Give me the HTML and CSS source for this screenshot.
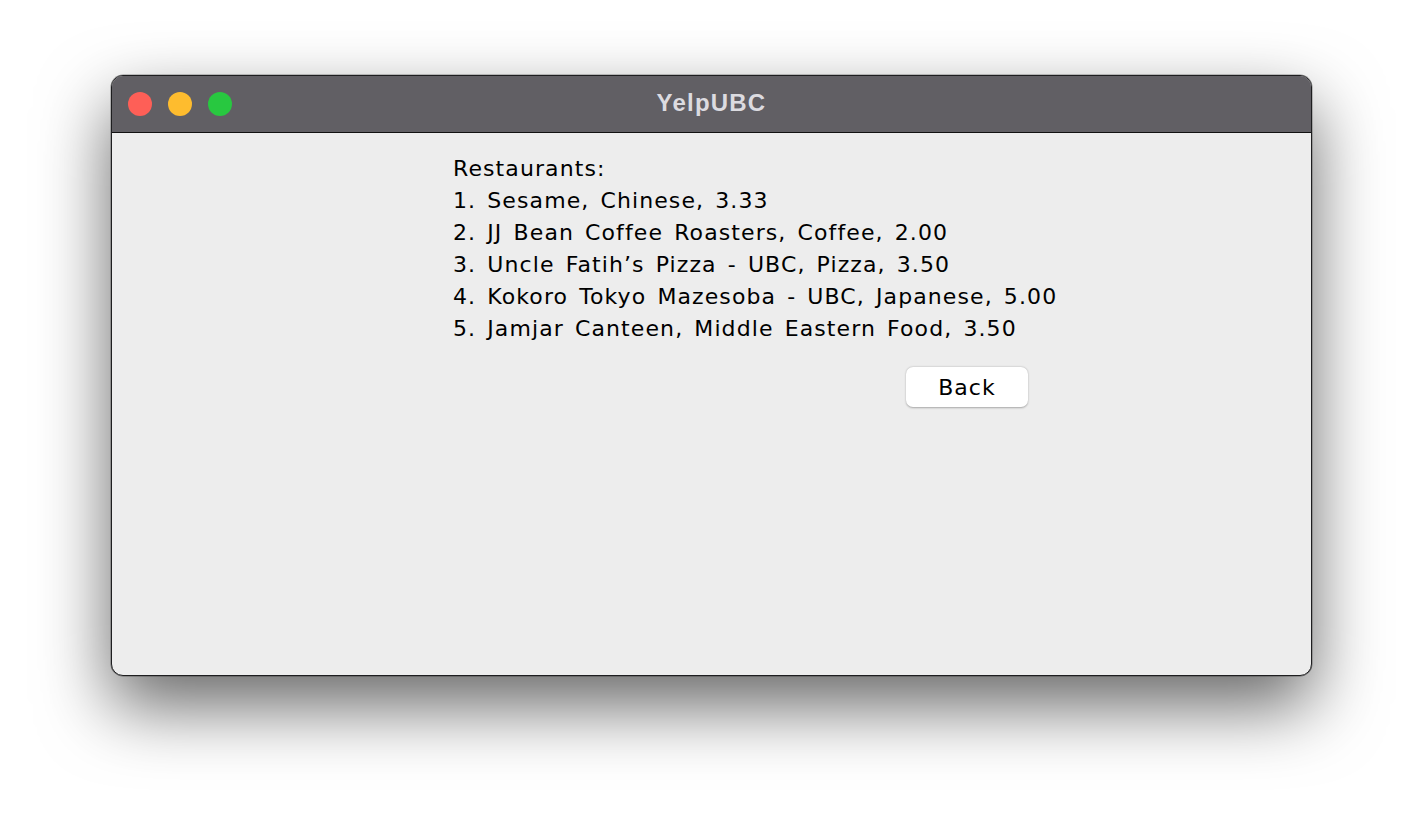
FILE: index.html
```html
<!DOCTYPE html>
<html>
<head>
<meta charset="utf-8">
<link rel="stylesheet" href="styles.css">
</head>
<body>
<div class="window">
  <div class="titlebar">
    <div class="lights">
      <span class="light red"></span>
      <span class="light yellow"></span>
      <span class="light green"></span>
    </div>
    <div class="title">YelpUBC</div>
  </div>
  <div class="content">
    <div class="list">
      <div class="line">Restaurants:</div>
      <div class="line">1. Sesame, Chinese, 3.33</div>
      <div class="line">2. JJ Bean Coffee Roasters, Coffee, 2.00</div>
      <div class="line">3. Uncle Fatih’s Pizza - UBC, Pizza, 3.50</div>
      <div class="line">4. Kokoro Tokyo Mazesoba - UBC, Japanese, 5.00</div>
      <div class="line">5. Jamjar Canteen, Middle Eastern Food, 3.50</div>
    </div>
    <div class="actions">
      <button class="btn">Back</button>
    </div>
  </div>
</div>
</body>
</html>
```
FILE: styles.css
```css
html, body {
  margin: 0;
  padding: 0;
  background: #ffffff;
  width: 1424px;
  height: 824px;
  overflow: hidden;
}
.window {
  margin: 75px 0 0 111px;
  width: 1201px;
  height: 601px;
  box-sizing: border-box;
  border: 1px solid #1e1e20;
  border-radius: 12px;
  overflow: hidden;
  background: #ededed;
  box-shadow: 0 30px 70px rgba(0, 0, 0, 0.6), 0 0 0 0.5px rgba(0,0,0,0.4);
  display: flex;
  flex-direction: column;
}
.titlebar {
  height: 57px;
  flex: none;
  box-sizing: border-box;
  background: #615f64;
  border-bottom: 1px solid #111;
  display: flex;
  align-items: center;
  position: relative;
}
.lights {
  display: flex;
  gap: 16px;
  padding-left: 16px;
}
.light {
  width: 24px;
  height: 24px;
  border-radius: 50%;
  display: block;
}
.red { background: #fe5f57; }
.yellow { background: #febc2e; }
.green { background: #28c840; }
.title {
  position: absolute;
  left: 0;
  right: 0;
  top: 0;
  bottom: 0;
  display: flex;
  align-items: center;
  justify-content: center;
  font-family: "Liberation Sans", Arial, sans-serif;
  font-weight: bold;
  font-size: 24px;
  letter-spacing: 1.2px;
  color: #dcdbe0;
  padding-bottom: 2px;
}
.content {
  flex: 1;
  padding: 20px 0 0 341px;
  font-family: "DejaVu Sans", sans-serif;
  font-size: 22px;
  letter-spacing: 1.1px;
  word-spacing: 3px;
  color: #000;
}
.line {
  line-height: 32px;
  white-space: nowrap;
}
.actions {
  padding: 22px 0 0 453px;
}
.btn {
  width: 122px;
  height: 40px;
  background: #fff;
  border: none;
  border-radius: 7px;
  box-shadow: 0 0.5px 2px rgba(0,0,0,0.3);
  font-family: "DejaVu Sans", sans-serif;
  font-size: 22px;
  letter-spacing: 1px;
  color: #000;
  padding: 0;
}
```
